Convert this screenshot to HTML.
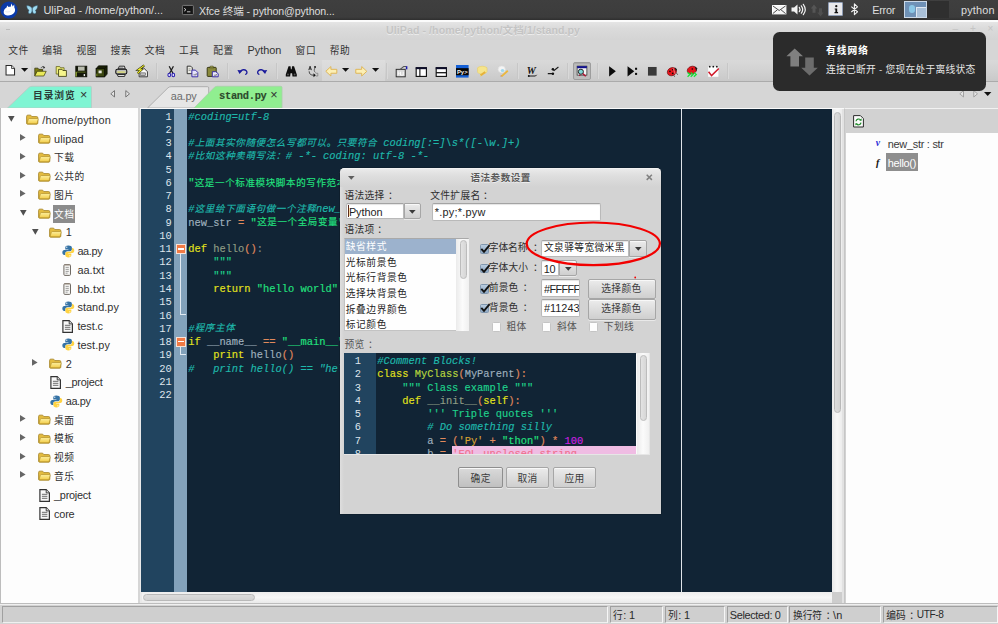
<!DOCTYPE html>
<html lang="zh-CN">
<head>
<meta charset="utf-8">
<title>UliPad - /home/python/文档/1/stand.py</title>
<style>
html,body{margin:0;padding:0;width:998px;height:624px;overflow:hidden;background:#d6d6d6}
body{position:relative;font-family:"Liberation Sans","Noto Sans CJK SC",sans-serif;font-size:10.4px;line-height:14px;color:#2e2e2e}
div,span,svg{position:absolute;box-sizing:border-box;white-space:pre}
svg{overflow:visible}
.m{font-family:"Liberation Mono","Noto Sans CJK SC",monospace;-webkit-text-stroke:.15px}
.n{line-height:14px;color:#dfe6ed;-webkit-text-stroke:0}
</style>
</head>
<body>

<!-- panel -->
<div id="panel" style="left:0px;top:0px;width:998px;height:19.6px;background:linear-gradient(#3f3f3f,#3c3c3c 85%,#2f2f2f)"></div>
<svg style="left:0px;top:0.6px;" width="18" height="18" viewBox="0 0 18 18"><circle cx="9" cy="9" r="8.600" fill="#0b3aa8"/><path d="M3.800 12.300C3.300 9.800 4.600 7.700 6.600 6.600L7.200 4.400 8.600 6C9.300 5.800 9.900 5.800 10.500 5.900L11.500 2.600 12.700 5.500 14.200 3.400 14.400 6.700C15.300 8.100 15.300 9.900 14.500 11.200 13 13.500 10 14.700 7.500 14.500 5.500 14.300 4.200 13.500 3.800 12.300Z" fill="#fff"/><path d="M5.500 10.500c1.500.8 3.500.6 5-.4" fill="none" stroke="#d9dfef" stroke-width=".7"/></svg>
<svg style="left:26px;top:4.5px;" width="12.5" height="10" viewBox="0 0 12.5 10"><path d="M6.2 3.300C4.800 1.400 2.300.2.600.700c.200 2 .9 3.700 2.400 4.600-.8.700-1 2-.3 3.300 1.400.5 2.800-.4 3.500-2.200.7 1.800 2.100 2.700 3.500 2.200.7-1.300.5-2.600-.3-3.300 1.500-.9 2.200-2.600 2.400-4.600-1.700-.5-4.200.7-5.600 2.600z" fill="#9fdcf3" stroke="#2b4a5e" stroke-width=".5"/><path d="M6.200 3.100v5.500" stroke="#35566b" stroke-width=".9"/></svg>
<span style="left:43.5px;top:3px;line-height:14px;font-size:10.9px;color:#dedede;letter-spacing:-0.01px;">UliPad - /home/python/...</span>
<svg style="left:182.2px;top:4.6px;" width="11.8" height="10" viewBox="0 0 11.8 10"><rect x=".4" y=".4" width="11" height="9.200" rx="1" fill="#161616" stroke="#8d8d8d" stroke-width=".8"/><path d="M2.200 3.300l1.800 1.400-1.800 1.400" fill="none" stroke="#e6e6e6" stroke-width=".9"/><path d="M5 6.800h3.400" stroke="#cfcfcf" stroke-width=".9"/></svg>
<span style="left:199px;top:3.7px;line-height:14px;font-size:10.6px;color:#dedede;letter-spacing:-0.09px;">Xfce 终端 - python@python...</span>
<svg style="left:772.4px;top:4.6px;" width="14.4" height="9.4" viewBox="0 0 14.4 9.4"><rect x=".5" y=".5" width="13.400" height="8.400" fill="#f4f4f4" stroke="#fff" stroke-width="1"/><path d="M.8.900l6.400 4.600 6.400-4.600M.8 8.600l4.600-3.800M13.600 8.600L9 4.800" fill="none" stroke="#3c3c3c" stroke-width=".9"/></svg>
<svg style="left:790.8px;top:3.2px;" width="15.5" height="13" viewBox="0 0 15.5 13"><path d="M.5 4.600h2.600L6.500 1.400v10.200L3.100 8.400H.5z" fill="#f2f2f2"/><path d="M8.300 4.300c.9 1.300.9 3.100 0 4.400M10.300 2.800c1.600 2.200 1.600 5.200 0 7.400M12.300 1.300c2.300 3.100 2.300 7.300 0 10.400" fill="none" stroke="#f2f2f2" stroke-width="1.200" stroke-linecap="round"/></svg>
<svg style="left:810px;top:3.5px;" width="15" height="13" viewBox="0 0 15 13"><path d="M4 .5l3.200 4H5.500v4.300h-3V4.500H.8z" fill="#555"/><path d="M10.500 12.500l-3.200-4H9V4.200h3v4.300h1.700z" fill="#4f4f4f"/></svg>
<div style="left:828.3px;top:1.8px;width:14.8px;height:14.6px;background:#e9e9ec;border:1px solid #8f9db5;border-radius:1px"></div>
<svg style="left:833.6px;top:5px;" width="4.4" height="8.5" viewBox="0 0 4.4 8.5"><circle cx="2.300" cy="1.200" r="1.150" fill="#111"/><path d="M.7 3.400h2.500v3.700h.9v1.200H.5V7.100h.9V4.500H.7z" fill="#111"/></svg>
<svg style="left:849.6px;top:3.3px;" width="9.5" height="12.6" viewBox="0 0 9.5 12.6"><path d="M1.300 3.600l6.200 5.200-3.100 2.900V.9l3.100 2.900-6.200 5.200" fill="none" stroke="#f2f2f2" stroke-width="1.100" stroke-linejoin="round"/></svg>
<span style="left:872.2px;top:3px;line-height:14px;font-size:10.9px;color:#dedede;letter-spacing:-0.24px;">Error</span>
<div style="left:903.9px;top:1.2px;width:23px;height:16.8px;background:#6f91b6;border:1px solid #cbd9e8"></div>
<div style="left:916.3px;top:7px;width:9.7px;height:10px;background:#a9c0d8;border-top:1px solid #dfe8f1;border-left:1px solid #dfe8f1"></div>
<div style="left:909px;top:4.5px;width:6px;height:8px;background:#8fd0ee;border-radius:3px;opacity:.85"></div>
<div style="left:926.9px;top:1.2px;width:22.3px;height:16.8px;background:#2f2f2f"></div>
<span style="left:961px;top:3px;line-height:14px;font-size:10.9px;color:#dedede;letter-spacing:0.15px;">python</span>
<!-- window -->
<div id="title" style="left:0px;top:19.6px;width:998px;height:20px;background:linear-gradient(#fbfbfb 0,#fbfbfb 1.5px,#e4e4e4 2.5px,#dadada 9px,#d4d4d4 100%)"></div>
<span style="left:386px;top:23.2px;line-height:14px;font-size:10.6px;font-weight:bold;color:#c4c4c4;letter-spacing:0.08px;text-shadow:0 1px 0 #ececec;">UliPad - /home/python/文档/1/stand.py</span>
<div style="left:6px;top:28.6px;width:4px;height:1.2px;background:#bcbcbc"></div>
<span style="left:952.5px;top:22px;line-height:14px;font-size:10px;color:#c4c4c4;">–</span>
<span style="left:970px;top:22px;line-height:14px;font-size:10px;color:#c4c4c4;">+</span>
<span style="left:987.5px;top:22px;line-height:14px;font-size:10px;color:#c4c4c4;">×</span>
<span style="left:8.2px;top:43.75px;line-height:14px;font-size:9.72px;color:#333;letter-spacing:0.58px;">文件</span>
<span style="left:42.2px;top:43.75px;line-height:14px;font-size:9.72px;color:#333;letter-spacing:0.58px;">编辑</span>
<span style="left:76.4px;top:43.75px;line-height:14px;font-size:9.72px;color:#333;letter-spacing:0.58px;">视图</span>
<span style="left:110.6px;top:43.75px;line-height:14px;font-size:9.72px;color:#333;letter-spacing:0.58px;">搜索</span>
<span style="left:144.8px;top:43.75px;line-height:14px;font-size:9.72px;color:#333;letter-spacing:0.58px;">文档</span>
<span style="left:179px;top:43.75px;line-height:14px;font-size:9.72px;color:#333;letter-spacing:0.58px;">工具</span>
<span style="left:213.2px;top:43.75px;line-height:14px;font-size:9.72px;color:#333;letter-spacing:0.58px;">配置</span>
<span style="left:247.4px;top:42.7px;line-height:14px;font-size:10.9px;color:#333;letter-spacing:0.02px;">Python</span>
<span style="left:295.6px;top:43.75px;line-height:14px;font-size:9.72px;color:#333;letter-spacing:0.58px;">窗口</span>
<span style="left:329.8px;top:43.75px;line-height:14px;font-size:9.72px;color:#333;letter-spacing:0.58px;">帮助</span>
<!-- toolbar -->
<div id="toolbar" style="left:0px;top:59.5px;width:998px;height:22px;background:linear-gradient(#d9d9d9,#d2d2d2 50%,#c9c9c9);border-bottom:1px solid #ababab"></div>
<div style="left:0px;top:59.5px;width:31px;height:21.5px;background:linear-gradient(#e0e0e0,#d6d6d6)"></div>
<div style="left:321.5px;top:59.5px;width:63px;height:21.5px;background:linear-gradient(#dedede,#d4d4d4)"></div>
<div style="left:156.3px;top:62.5px;width:1px;height:16.5px;background:#c7c7c7;box-shadow:1px 0 0 #d9d9d9"></div>
<div style="left:226.5px;top:62.5px;width:1px;height:16.5px;background:#c7c7c7;box-shadow:1px 0 0 #d9d9d9"></div>
<div style="left:275.8px;top:62.5px;width:1px;height:16.5px;background:#c7c7c7;box-shadow:1px 0 0 #d9d9d9"></div>
<div style="left:386px;top:62.5px;width:1px;height:16.5px;background:#c7c7c7;box-shadow:1px 0 0 #d9d9d9"></div>
<div style="left:516.5px;top:62.5px;width:1px;height:16.5px;background:#c7c7c7;box-shadow:1px 0 0 #d9d9d9"></div>
<div style="left:566.5px;top:62.5px;width:1px;height:16.5px;background:#c7c7c7;box-shadow:1px 0 0 #d9d9d9"></div>
<div style="left:597.2px;top:62.5px;width:1px;height:16.5px;background:#c7c7c7;box-shadow:1px 0 0 #d9d9d9"></div>
<div style="left:726.8px;top:62.5px;width:1px;height:16.5px;background:#c7c7c7;box-shadow:1px 0 0 #d9d9d9"></div>
<div style="left:573.4px;top:61.6px;width:18px;height:18px;background:#bdbdbd;border:1px solid #9d9d9d;border-radius:2px;box-shadow:inset 0 1px 1px #a8a8a8"></div>
<svg style="left:3.5px;top:64.6px" width="12.6" height="12.6" viewBox="0 0 16 16"><path d="M2.600 .700h7l3.800 3.800v8.300H2.600z" fill="#fff" stroke="#2a2a2a" stroke-width="1.300"/><path d="M9.600 .700v3.800h3.800" fill="#ddd" stroke="#2a2a2a" stroke-width="1"/></svg>
<svg style="left:34.4px;top:64.6px" width="12.6" height="12.6" viewBox="0 0 16 16"><path d="M1 4h4l1 1.500h5V8H4l-2.500 5.500H1z" fill="#7d7d12" stroke="#2a2a08" stroke-width=".9"/><path d="M4 8h11.500l-3 6H1z" fill="#e9e95a" stroke="#3a3a08" stroke-width=".9"/><path d="M9 3.500c1.200-1.800 3.200-1.800 4.500-.5" fill="none" stroke="#222" stroke-width="1"/><path d="M12.300 1.500l1.900 2.200-2.700.6z" fill="#222"/></svg>
<svg style="left:55.1px;top:64.6px" width="12.6" height="12.6" viewBox="0 0 16 16"><path d="M1.500 2h4.500l1 1.500h4.500v8h-10z" fill="#efef7a" stroke="#55550a" stroke-width=".9"/><path d="M4.500 5.500H9l1 1.500h4.500v7.500h-10z" fill="#f5f58c" stroke="#33330a" stroke-width="1"/></svg>
<svg style="left:75.1px;top:64.6px" width="12.6" height="12.6" viewBox="0 0 16 16"><rect x="1" y="1.500" width="14" height="13.500" fill="#14180a" stroke="#0a0c04" stroke-width="1"/><rect x="3.800" y="2" width="8.400" height="5.200" fill="#b9bcae"/><path d="M1.500 8.500v6" stroke="#a9c23a" stroke-width="1.400"/><path d="M2.500 9h11" stroke="#6f7f22" stroke-width="1"/><rect x="11" y="11.500" width="1.800" height="2.600" fill="#e8e8e8"/></svg>
<svg style="left:95px;top:64.6px" width="12.6" height="12.6" viewBox="0 0 16 16"><path d="M4.500 1h11v10.500l-3 3.500h-11V4.500z" fill="#1a2006" stroke="#0a0c03" stroke-width=".8"/><rect x="1.500" y="4.500" width="10.500" height="10.500" fill="#3b4610" stroke="#0c0e06" stroke-width=".9"/><rect x="4.500" y="7" width="4" height="3.500" fill="#e6e8de"/><path d="M12 4.500L15.500 1" stroke="#0a0c03" stroke-width=".8"/><path d="M2.300 11v3.300" stroke="#8fa42e" stroke-width="1"/></svg>
<svg style="left:115.4px;top:64.6px" width="12.6" height="12.6" viewBox="0 0 16 16"><path d="M4 5l1.500-3.500h6.500L13 5z" fill="#e9e9e9" stroke="#111" stroke-width="1.100"/><path d="M5.500 3.500h5M5 4.800h6" stroke="#555" stroke-width=".7"/><rect x="1" y="5.500" width="14" height="6" rx="2" fill="#bdbdbd" stroke="#0d0d0d" stroke-width="1.300"/><path d="M3 9h10" stroke="#e6e85a" stroke-width="1.300"/><path d="M3 12h10l-.8 2.500H3.800z" fill="#f2f2f2" stroke="#111" stroke-width="1.100"/></svg>
<svg style="left:136.2px;top:64.6px" width="12.6" height="12.6" viewBox="0 0 16 16"><path d="M4 8.500L9.500 3.500l5 5v6.500H4z" fill="#fafafa" stroke="#222" stroke-width="1.100"/><rect x="6" y="10" width="6" height="3.500" fill="#bdbdbd" stroke="#444" stroke-width=".7"/><path d="M10.500.5L3 6h4L2 10.500" fill="none" stroke="#1b1b00" stroke-width="2.600"/><path d="M10.500.5L3 6h4L2 10.500" fill="none" stroke="#f0ee2a" stroke-width="1.400"/></svg>
<svg style="left:165.2px;top:64.6px" width="12.6" height="12.6" viewBox="0 0 16 16"><path d="M5.300 1.500l4.800 9M10.700 1.500l-4.800 9" stroke="#1c1c1c" stroke-width="1.600" fill="none"/><ellipse cx="5.400" cy="12.700" rx="1.700" ry="2.300" fill="#dcdcff" stroke="#2b1fae" stroke-width="1.300"/><ellipse cx="10.600" cy="12.700" rx="1.700" ry="2.300" fill="#dcdcff" stroke="#2b1fae" stroke-width="1.300"/></svg>
<svg style="left:185.5px;top:64.6px" width="12.6" height="12.6" viewBox="0 0 16 16"><path d="M1.500 1.500h4.500l2 2v7.500h-6.500z" fill="#ecece4" stroke="#1d1d1d" stroke-width="1.100"/><path d="M3.300 5h2.500M3.300 7h2.500" stroke="#555" stroke-width=".7"/><path d="M7.500 6.500h4.500l3 3V15h-7.500z" fill="#e6e4fa" stroke="#3224a4" stroke-width="1.200"/><path d="M9.500 12.500h3.500v-2" fill="none" stroke="#555" stroke-width=".9"/></svg>
<svg style="left:206.2px;top:64.6px" width="12.6" height="12.6" viewBox="0 0 16 16"><rect x="1.500" y="3" width="11.500" height="11.500" rx="1" fill="#8a8a3c" stroke="#2c2c0c" stroke-width="1.100"/><path d="M4.500 3.500L5.500 1.500h3.500l1 2z" fill="#d6d86a" stroke="#2c2c0c" stroke-width=".8"/><path d="M8 8.500h4.500l3 2.500v4h-7.500z" fill="#ebe9fb" stroke="#3224a4" stroke-width="1.200"/><path d="M10 13h3.200v-1.500" fill="none" stroke="#555" stroke-width=".9"/></svg>
<svg style="left:235.7px;top:64.6px" width="12.6" height="12.6" viewBox="0 0 16 16"><path d="M5.500 8.300c1.500-2.600 5.500-3 7.500-1 1.400 1.500 1.200 3.400-.6 4.500" fill="none" stroke="#1c1c9c" stroke-width="1.700" stroke-linecap="round"/><path d="M1.800 6.200l6.500.8-3.800 4.500z" fill="#1c1c9c"/></svg>
<svg style="left:255.7px;top:64.6px" width="12.6" height="12.6" viewBox="0 0 16 16"><path d="M10.500 8.300c-1.500-2.600-5.500-3-7.500-1-1.400 1.500-1.200 3.400.6 4.500" fill="none" stroke="#1c1c9c" stroke-width="1.700" stroke-linecap="round"/><path d="M14.200 6.200l-6.500.8 3.800 4.500z" fill="#1c1c9c"/></svg>
<svg style="left:285px;top:64.6px" width="12.6" height="12.6" viewBox="0 0 16 16"><path d="M4.500 1.500h2.500l.5 4h1l.5-4h2.500l3.500 10.500v2.500H9.500l-.5-4H7l-.5 4H1V12z" fill="#0d0d0d"/><circle cx="3.800" cy="12" r="1.200" fill="#555"/><circle cx="12.200" cy="12" r="1.200" fill="#555"/></svg>
<svg style="left:306.1px;top:64.6px" width="12.6" height="12.6" viewBox="0 0 16 16"><path d="M3.500 6.500L5.200 1.500l1.700 5M4.100 5h2.200" fill="none" stroke="#1d1d1d" stroke-width="1.100"/><path d="M4 8c0 3.500 2 5 6 5" fill="none" stroke="#333" stroke-width="1.100"/><path d="M9.500 10.500l3 2.500-3 2.500z" fill="#111"/><circle cx="11.500" cy="2.500" r="1.200" fill="#111"/><path d="M11.500 3.500c-1.500 2-1.500 4.500.5 6" fill="none" stroke="#444" stroke-width="1"/><path d="M12.500 10.500h2.500v3.500h-2.500" fill="none" stroke="#777" stroke-width=".9"/></svg>
<svg style="left:325.4px;top:64.6px" width="12.6" height="12.6" viewBox="0 0 16 16"><path d="M1 8l6.500-6v3.500H15v5H7.500V14z" fill="#fcefb4" stroke="#ddb454" stroke-width="1.200" stroke-linejoin="round"/></svg>
<svg style="left:355px;top:64.6px" width="12.6" height="12.6" viewBox="0 0 16 16"><path d="M15 8L8.500 2v3.500H1v5h7.500V14z" fill="#fcefb4" stroke="#ddb454" stroke-width="1.200" stroke-linejoin="round"/></svg>
<svg style="left:394.5px;top:64.6px" width="12.6" height="12.6" viewBox="0 0 16 16"><rect x="1.500" y="5.500" width="11.500" height="9.500" fill="#d9d9d9" stroke="#2a2a2a" stroke-width="1.200"/><path d="M4 8v5M4 10.500h2M7 8.500v4.500h3.500V8.500" fill="none" stroke="#fafafa" stroke-width="1.200"/><path d="M6.500 5.500L11 2h3" fill="none" stroke="#555" stroke-width="1.300"/><rect x="13.800" y="1.500" width="1.900" height="4" fill="#1b1bb0"/></svg>
<svg style="left:415px;top:64.6px" width="12.6" height="12.6" viewBox="0 0 16 16"><rect x="1.500" y="3.500" width="13" height="11" fill="#fff" stroke="#0d0d0d" stroke-width="1.400"/><rect x="1" y="2.800" width="14" height="2.500" fill="#0d0d2a"/><path d="M6.200 5v9.500" stroke="#0d0d0d" stroke-width="1.400"/></svg>
<svg style="left:435px;top:64.6px" width="12.6" height="12.6" viewBox="0 0 16 16"><rect x="1.500" y="3.500" width="13" height="11" fill="#fff" stroke="#0d0d0d" stroke-width="1.400"/><rect x="1" y="2.800" width="14" height="2.500" fill="#0d0d2a"/><path d="M1.500 9.800h13" stroke="#0d0d0d" stroke-width="1.600"/></svg>
<svg style="left:455.7px;top:64.6px" width="12.6" height="12.6" viewBox="0 0 16 16"><rect x="0" y="0" width="16" height="16" fill="#1560d6"/><rect x="0" y="4" width="16" height="9" fill="#050505"/><text x="1.200" y="11.400" font-family="Liberation Sans,sans-serif" font-size="7.500" font-weight="bold" fill="#f2f2f2">Py&gt;</text></svg>
<svg style="left:476.2px;top:64.6px" width="12.6" height="12.6" viewBox="0 0 16 16"><path d="M2 3.500c3-2.500 9-2.500 12 0v5c-1 2-3 2.500-4.500 2.500L6 14.500V11C3.500 11 2 10 2 8.500z" fill="#f5e48c" stroke="#e8cf6a" stroke-width=".8"/><path d="M5 12l6-4 1.500 2-5.500 4z" fill="#e6b23a"/></svg>
<svg style="left:497px;top:64.6px" width="12.6" height="12.6" viewBox="0 0 16 16"><ellipse cx="6" cy="5.500" rx="4.500" ry="4.200" fill="#f4f4f4" stroke="#e0e0e0" stroke-width=".8"/><ellipse cx="7" cy="7" rx="2.300" ry="2" fill="#9fd8ee"/><path d="M5 13.500l8-7 1.500 1.800-8 7z" fill="#ecb73c"/><path d="M4.500 14.500l1.500-.3-1-1.200z" fill="#b0502a"/></svg>
<svg style="left:526.1px;top:64.6px" width="12.6" height="12.6" viewBox="0 0 16 16"><text x="1" y="11.500" font-family="Liberation Serif,serif" font-size="13" font-style="italic" font-weight="bold" fill="#111">W</text><path d="M3.500 14h8.500l1.500-1.500" fill="none" stroke="#111" stroke-width="1.200"/><circle cx="3.500" cy="14" r="1.200" fill="#111"/></svg>
<svg style="left:546.6px;top:64.6px" width="12.6" height="12.6" viewBox="0 0 16 16"><path d="M1 11h6.500M7.500 5.500L9 7l5.500-4.500" fill="none" stroke="#1a1a1a" stroke-width="1.400"/><circle cx="7.500" cy="11" r="1.600" fill="#111"/><circle cx="7.500" cy="5.500" r="1.600" fill="#111"/></svg>
<svg style="left:605.7px;top:64.6px" width="12.6" height="12.6" viewBox="0 0 16 16"><path d="M4 1.500v13L12.500 8z" fill="#0b0b0b"/></svg>
<svg style="left:625.7px;top:64.6px" width="12.6" height="12.6" viewBox="0 0 16 16"><path d="M2 1.500v13L10.500 8z" fill="#0b0b0b"/><rect x="11.500" y="3.500" width="2.600" height="2.600" fill="#0b0b0b"/><rect x="11.500" y="10" width="2.600" height="2.600" fill="#0b0b0b"/></svg>
<svg style="left:645.8px;top:64.6px" width="12.6" height="12.6" viewBox="0 0 16 16"><rect x="2.500" y="2.500" width="11" height="11" fill="#3a3a3a"/></svg>
<svg style="left:665.7px;top:64.6px" width="12.6" height="12.6" viewBox="0 0 16 16"><ellipse cx="7.500" cy="8.500" rx="6" ry="5" transform="rotate(-25 7.500 8.500)" fill="#e8141c" stroke="#6c0a0e" stroke-width=".8"/><path d="M11 3l3 2.500-1.500 3z" fill="#1c1c1c"/><circle cx="5" cy="8" r="1.100" fill="#160808"/><circle cx="8.500" cy="10.500" r="1.100" fill="#160808"/><circle cx="8.500" cy="6" r="1" fill="#160808"/><path d="M9 4l3 8" stroke="#f7a0a6" stroke-width=".8"/><path d="M13 10l2 2.500M10 13l1 2" stroke="#222" stroke-width=".8"/></svg>
<svg style="left:686.2px;top:64.6px" width="12.6" height="12.6" viewBox="0 0 16 16"><ellipse cx="7.500" cy="6.500" rx="6" ry="4.800" transform="rotate(-20 7.500 6.500)" fill="#e8141c" stroke="#6c0a0e" stroke-width=".8"/><path d="M11 1.500l3.500 2.500-1.500 3.500z" fill="#1c1c1c"/><circle cx="8" cy="5" r="1" fill="#160808"/><path d="M2 9.500l3 2.700-3 2.700M6 9.500l3 2.700-3 2.700M10 9.500l3 2.700-3 2.700" fill="none" stroke="#17e43a" stroke-width="1.700"/></svg>
<svg style="left:707px;top:64.6px" width="12.6" height="12.6" viewBox="0 0 16 16"><rect x="1.500" y="2" width="13" height="13" fill="#fdfdfd"/><circle cx="3.500" cy="2.200" r="1.100" fill="#111"/><circle cx="8" cy="2.200" r="1.100" fill="#111"/><circle cx="12.500" cy="2.200" r="1.100" fill="#111"/><path d="M2 8.500l3.800 5L15 4.500" fill="none" stroke="#d01828" stroke-width="1.900"/></svg>
<svg style="left:576.4px;top:64.8px" width="12" height="12" viewBox="0 0 16 16"><rect x="1.500" y="1.500" width="13" height="12" fill="#f6f6f6" stroke="#333" stroke-width="1"/><rect x="1.500" y="1.500" width="13" height="2.800" fill="#12128c"/><circle cx="6.500" cy="9" r="3.400" fill="#7fd6d6" stroke="#222" stroke-width="1.300"/><path d="M9 11.500l4 3.500" stroke="#b01030" stroke-width="1.800"/><circle cx="5" cy="13.500" r="1" fill="#b01030"/></svg>
<svg style="left:20.7px;top:67.8px" width="7.2" height="3.8" viewBox="0 0 8 4"><path d="M0 0h8L4 4z" fill="#111"/></svg>
<svg style="left:342.1px;top:67.8px" width="7.2" height="3.8" viewBox="0 0 8 4"><path d="M0 0h8L4 4z" fill="#111"/></svg>
<svg style="left:371.8px;top:67.8px" width="7.2" height="3.8" viewBox="0 0 8 4"><path d="M0 0h8L4 4z" fill="#111"/></svg>
<!-- tabs -->
<svg style="left:0;top:84px" width="300" height="25" viewBox="0 84 300 25"><path d="M7.500 108L29 87.400q1.200-1.100 3-1.100H90.300q1.200 0 1.200 1.200V108z" fill="#7ff5d3" stroke="#b7c9c3" stroke-width=".8"/><path d="M147.500 108L168 87.800q1.200-1.100 3-1.100h36.500q1.200 0 1.200 1.200V108z" fill="#e6e6e6" stroke="#a9a9a9" stroke-width=".9"/><path d="M194 108L214.300 87.400q1.200-1.100 3-1.100h63.500q1.200 0 1.200 1.200V108z" fill="#90ee90" stroke="#a8cfa8" stroke-width=".8"/></svg>
<span style="left:33px;top:88.65px;line-height:14px;font-size:9.72px;font-weight:bold;color:#2b3b36;letter-spacing:0.93px;">目录浏览</span>
<span style="left:79.9px;top:87.9px;line-height:14px;font-size:12.6px;color:#333;">×</span>
<svg style="left:110.4px;top:89.5px" width="5.4" height="7.6" viewBox="0 0 5.400 7.600"><path d="M4.5 .6L.8 3.800l3.700 3.200z" fill="#e6e6e6" stroke="#6a6a6a" stroke-width=".9"/></svg>
<svg style="left:124.6px;top:89.5px" width="5.4" height="7.6" viewBox="0 0 5.400 7.600"><path d="M.8 .6l3.700 3.200L.8 7z" fill="#e6e6e6" stroke="#6a6a6a" stroke-width=".9"/></svg>
<span style="left:170.8px;top:89.3px;line-height:14px;font-size:10.9px;color:#6b6b6b;letter-spacing:-0.17px;">aa.py</span>
<span class="m" style="left:219px;top:89px;line-height:14px;font-weight:bold;color:#2c4a2c;letter-spacing:-0.29px;">stand.py</span>
<span style="left:270.3px;top:87.9px;line-height:14px;font-size:12.6px;color:#333;">×</span>
<svg style="left:959.2px;top:89.5px" width="5.4" height="7.6" viewBox="0 0 5.400 7.600"><path d="M4.5 .6L.8 3.800l3.700 3.200z" fill="#e6e6e6" stroke="#9a9a9a" stroke-width=".9"/></svg>
<svg style="left:973.2px;top:89.5px" width="5.4" height="7.6" viewBox="0 0 5.400 7.600"><path d="M.8 .6l3.700 3.200L.8 7z" fill="#e6e6e6" stroke="#9a9a9a" stroke-width=".9"/></svg>
<svg style="left:984px;top:91.6px;" width="7.4" height="4" viewBox="0 0 7.4 4"><path d="M0 0h7.400L3.700 4z" fill="#111"/></svg>
<!-- tree -->
<svg width="0" height="0" style="left:0;top:0"><defs><linearGradient id="fg" x1="0" y1="0" x2="0" y2="1"><stop offset="0" stop-color="#fdf0a0"/><stop offset="1" stop-color="#f2cc48"/></linearGradient></defs></svg>
<div style="left:0px;top:107.6px;width:1.2px;height:495.2px;background:#bdbdbd"></div>
<div id="left" style="left:1.2px;top:107.6px;width:136.5px;height:495.2px;background:#fdfdfd"></div>
<svg style="left:8.3px;top:116.2px" width="6.6" height="5.8" viewBox="0 0 6.600 5.800"><path d="M0 0h6.600L3.300 5.800z" fill="#505050"/></svg>
<svg style="left:25.9px;top:114.3px;" width="12.6" height="10.8" viewBox="0 0 13 11"><path d="M.6 2.400q0-1.300 1.300-1.300h2.900l1.200 1.500h4.900q1.300 0 1.300 1.300v5.400q0 1.100-1.100 1.100H1.700Q.6 10.400.6 9.300z" fill="#e3bb3e" stroke="#a07f22" stroke-width=".8"/><path d="M1 10L2.400 5.400q.3-.8 1.200-.8h8.300q.9 0 .6.900L11.400 10z" fill="url(#fg)" stroke="#b08e28" stroke-width=".7"/></svg>
<span style="left:42.3px;top:113px;line-height:14px;font-size:10.9px;color:#303030;letter-spacing:0.22px;">/home/python</span>
<svg style="left:19.9px;top:134.04px" width="5.6" height="6.8" viewBox="0 0 5.600 6.800"><path d="M0 0v6.800L5.600 3.400z" fill="#666"/></svg>
<svg style="left:37.6px;top:133.04px;" width="12.6" height="10.8" viewBox="0 0 13 11"><path d="M.6 2.400q0-1.300 1.300-1.300h2.900l1.200 1.500h4.900q1.300 0 1.300 1.300v5.400q0 1.100-1.100 1.100H1.700Q.6 10.400.6 9.300z" fill="#e3bb3e" stroke="#a07f22" stroke-width=".8"/><path d="M1 10L2.400 5.400q.3-.8 1.200-.8h8.300q.9 0 .6.900L11.400 10z" fill="url(#fg)" stroke="#b08e28" stroke-width=".7"/></svg>
<span style="left:54px;top:131.74px;line-height:14px;font-size:10.9px;color:#303030;letter-spacing:0.09px;">ulipad</span>
<svg style="left:19.9px;top:152.78px" width="5.6" height="6.8" viewBox="0 0 5.600 6.800"><path d="M0 0v6.800L5.600 3.400z" fill="#666"/></svg>
<svg style="left:37.6px;top:151.78px;" width="12.6" height="10.8" viewBox="0 0 13 11"><path d="M.6 2.400q0-1.300 1.300-1.300h2.900l1.200 1.500h4.900q1.300 0 1.300 1.300v5.400q0 1.100-1.100 1.100H1.700Q.6 10.400.6 9.300z" fill="#e3bb3e" stroke="#a07f22" stroke-width=".8"/><path d="M1 10L2.400 5.400q.3-.8 1.200-.8h8.300q.9 0 .6.900L11.400 10z" fill="url(#fg)" stroke="#b08e28" stroke-width=".7"/></svg>
<span style="left:54px;top:151.33px;line-height:14px;font-size:9.72px;color:#303030;letter-spacing:0.58px;">下载</span>
<svg style="left:19.9px;top:171.52px" width="5.6" height="6.8" viewBox="0 0 5.600 6.800"><path d="M0 0v6.800L5.600 3.400z" fill="#666"/></svg>
<svg style="left:37.6px;top:170.52px;" width="12.6" height="10.8" viewBox="0 0 13 11"><path d="M.6 2.400q0-1.300 1.300-1.300h2.900l1.200 1.500h4.900q1.300 0 1.300 1.300v5.400q0 1.100-1.100 1.100H1.700Q.6 10.400.6 9.300z" fill="#e3bb3e" stroke="#a07f22" stroke-width=".8"/><path d="M1 10L2.400 5.400q.3-.8 1.200-.8h8.300q.9 0 .6.900L11.400 10z" fill="url(#fg)" stroke="#b08e28" stroke-width=".7"/></svg>
<span style="left:54px;top:170.07px;line-height:14px;font-size:9.72px;color:#303030;letter-spacing:0.58px;">公共的</span>
<svg style="left:19.9px;top:190.26px" width="5.6" height="6.8" viewBox="0 0 5.600 6.800"><path d="M0 0v6.800L5.600 3.400z" fill="#666"/></svg>
<svg style="left:37.6px;top:189.26px;" width="12.6" height="10.8" viewBox="0 0 13 11"><path d="M.6 2.400q0-1.300 1.300-1.300h2.900l1.200 1.500h4.900q1.300 0 1.300 1.300v5.400q0 1.100-1.100 1.100H1.700Q.6 10.400.6 9.300z" fill="#e3bb3e" stroke="#a07f22" stroke-width=".8"/><path d="M1 10L2.400 5.400q.3-.8 1.200-.8h8.300q.9 0 .6.900L11.400 10z" fill="url(#fg)" stroke="#b08e28" stroke-width=".7"/></svg>
<span style="left:54px;top:188.81px;line-height:14px;font-size:9.72px;color:#303030;letter-spacing:0.58px;">图片</span>
<svg style="left:20px;top:209.9px" width="6.6" height="5.8" viewBox="0 0 6.600 5.800"><path d="M0 0h6.600L3.300 5.800z" fill="#505050"/></svg>
<svg style="left:37.6px;top:208px;" width="12.6" height="10.8" viewBox="0 0 13 11"><path d="M.6 2.400q0-1.300 1.300-1.300h2.900l1.200 1.500h4.900q1.300 0 1.300 1.300v5.400q0 1.100-1.100 1.100H1.700Q.6 10.400.6 9.300z" fill="#e3bb3e" stroke="#a07f22" stroke-width=".8"/><path d="M1 10L2.400 5.400q.3-.8 1.200-.8h8.300q.9 0 .6.900L11.400 10z" fill="url(#fg)" stroke="#b08e28" stroke-width=".7"/></svg>
<div style="left:52.6px;top:204.8px;width:22.6px;height:17.8px;background:#8b8b8b"></div>
<span style="left:54px;top:208.05px;line-height:14px;font-size:9.72px;color:#fff;letter-spacing:0.58px;">文档</span>
<svg style="left:31.7px;top:228.64px" width="6.6" height="5.8" viewBox="0 0 6.600 5.800"><path d="M0 0h6.600L3.300 5.800z" fill="#505050"/></svg>
<svg style="left:49.3px;top:226.74px;" width="12.6" height="10.8" viewBox="0 0 13 11"><path d="M.6 2.400q0-1.300 1.300-1.300h2.900l1.200 1.500h4.900q1.300 0 1.300 1.300v5.400q0 1.100-1.100 1.100H1.700Q.6 10.400.6 9.300z" fill="#e3bb3e" stroke="#a07f22" stroke-width=".8"/><path d="M1 10L2.400 5.400q.3-.8 1.200-.8h8.300q.9 0 .6.900L11.400 10z" fill="url(#fg)" stroke="#b08e28" stroke-width=".7"/></svg>
<span style="left:65.7px;top:225.44px;line-height:14px;font-size:10.9px;color:#303030;">1</span>
<svg style="left:61.9px;top:244.58px;" width="12.6" height="13" viewBox="0 0 12.800 13.300"><path d="M6.300.5c-2 0-3 .8-3 2.200V4.500h3.200v.7H2.300C1 5.200.3 6.300.3 7.800s.8 2.500 2 2.500h1.100V8.500c0-1.300 1-2.200 2.300-2.200h2.600c1 0 1.800-.8 1.800-1.900V2.700C10.100 1.300 8.900.5 6.300.5z" fill="#3673a5"/><circle cx="4.800" cy="2.200" r=".65" fill="#fff"/><path d="M6.500 12.800c2 0 3-.8 3-2.200V8.800H6.300v-.7h4.200c1.300 0 2-1.100 2-2.600s-.8-2.500-2-2.500h-.4v1.800c0 1.300-1 2.200-2.300 2.200H5.200c-1 0-1.800.8-1.800 1.900v1.700c0 1.400 1.200 2.200 3.100 2.200z" fill="#ffd342"/><circle cx="8" cy="11.100" r=".65" fill="#fff"/></svg>
<span style="left:77.4px;top:244.18px;line-height:14px;font-size:10.9px;color:#303030;letter-spacing:-0.35px;">aa.py</span>
<svg style="left:63.2px;top:263.82px;" width="8.4" height="12" viewBox="0 0 8.400 12"><path d="M.9 1.600Q.9.600 1.900.600h4.600Q7.500.6 7.500 1.600v8.800q0 1-1 1H1.900q-1 0-1-1z" fill="#f4f4f2" stroke="#6e6862" stroke-width="1"/><path d="M2.600 3.400h3.200M2.600 5.400h3.200M2.600 7.400h3.200M2.600 9.200h2" stroke="#8a8a8a" stroke-width=".8"/><path d="M1.200 1h6" stroke="#9c8c80" stroke-width=".9"/></svg>
<span style="left:77.4px;top:262.92px;line-height:14px;font-size:10.9px;color:#303030;letter-spacing:0.06px;">aa.txt</span>
<svg style="left:63.2px;top:282.56px;" width="8.4" height="12" viewBox="0 0 8.400 12"><path d="M.9 1.600Q.9.600 1.900.600h4.600Q7.500.6 7.500 1.600v8.800q0 1-1 1H1.900q-1 0-1-1z" fill="#f4f4f2" stroke="#6e6862" stroke-width="1"/><path d="M2.600 3.400h3.200M2.600 5.400h3.200M2.600 7.400h3.200M2.600 9.200h2" stroke="#8a8a8a" stroke-width=".8"/><path d="M1.200 1h6" stroke="#9c8c80" stroke-width=".9"/></svg>
<span style="left:77.4px;top:281.66px;line-height:14px;font-size:10.9px;color:#303030;letter-spacing:0.16px;">bb.txt</span>
<svg style="left:61.9px;top:300.8px;" width="12.6" height="13" viewBox="0 0 12.800 13.300"><path d="M6.300.5c-2 0-3 .8-3 2.200V4.500h3.200v.7H2.300C1 5.200.3 6.300.3 7.800s.8 2.500 2 2.500h1.100V8.500c0-1.300 1-2.200 2.300-2.200h2.600c1 0 1.800-.8 1.800-1.900V2.700C10.100 1.300 8.900.5 6.300.5z" fill="#3673a5"/><circle cx="4.800" cy="2.200" r=".65" fill="#fff"/><path d="M6.500 12.800c2 0 3-.8 3-2.200V8.800H6.300v-.7h4.200c1.300 0 2-1.100 2-2.600s-.8-2.500-2-2.500h-.4v1.800c0 1.300-1 2.200-2.300 2.200H5.200c-1 0-1.800.8-1.800 1.900v1.700c0 1.400 1.200 2.200 3.100 2.200z" fill="#ffd342"/><circle cx="8" cy="11.100" r=".65" fill="#fff"/></svg>
<span style="left:77.4px;top:300.4px;line-height:14px;font-size:10.9px;color:#303030;letter-spacing:0.04px;">stand.py</span>
<svg style="left:61.9px;top:319.94px;" width="11.3" height="13" viewBox="0 0 11.300 13"><path d="M.9 .700h6.300l3.200 3.200v8.400H.9z" fill="#f9f9f9" stroke="#333" stroke-width="1.200"/><path d="M7.200 .700v3.200h3.200" fill="#e2e2e2" stroke="#333" stroke-width=".9"/><path d="M2.900 5.300h5.500M2.900 7.300h5.500M2.900 9.300h5.500" stroke="#6a6a6a" stroke-width="1"/></svg>
<span style="left:77.4px;top:319.14px;line-height:14px;font-size:10.9px;color:#303030;letter-spacing:-0.07px;">test.c</span>
<svg style="left:61.9px;top:338.28px;" width="12.6" height="13" viewBox="0 0 12.800 13.300"><path d="M6.300.5c-2 0-3 .8-3 2.200V4.500h3.200v.7H2.300C1 5.200.3 6.300.3 7.800s.8 2.500 2 2.500h1.100V8.500c0-1.300 1-2.200 2.300-2.200h2.600c1 0 1.800-.8 1.800-1.900V2.700C10.100 1.300 8.900.5 6.300.5z" fill="#3673a5"/><circle cx="4.800" cy="2.200" r=".65" fill="#fff"/><path d="M6.500 12.800c2 0 3-.8 3-2.200V8.800H6.300v-.7h4.200c1.300 0 2-1.100 2-2.600s-.8-2.500-2-2.500h-.4v1.800c0 1.300-1 2.200-2.300 2.200H5.200c-1 0-1.800.8-1.800 1.900v1.700c0 1.400 1.200 2.200 3.100 2.200z" fill="#ffd342"/><circle cx="8" cy="11.100" r=".65" fill="#fff"/></svg>
<span style="left:77.4px;top:337.88px;line-height:14px;font-size:10.9px;color:#303030;letter-spacing:0.06px;">test.py</span>
<svg style="left:31.6px;top:358.92px" width="5.6" height="6.8" viewBox="0 0 5.600 6.800"><path d="M0 0v6.800L5.600 3.400z" fill="#666"/></svg>
<svg style="left:49.3px;top:357.92px;" width="12.6" height="10.8" viewBox="0 0 13 11"><path d="M.6 2.400q0-1.300 1.300-1.300h2.900l1.200 1.500h4.900q1.300 0 1.300 1.300v5.400q0 1.100-1.100 1.100H1.700Q.6 10.400.6 9.300z" fill="#e3bb3e" stroke="#a07f22" stroke-width=".8"/><path d="M1 10L2.400 5.400q.3-.8 1.200-.8h8.300q.9 0 .6.900L11.400 10z" fill="url(#fg)" stroke="#b08e28" stroke-width=".7"/></svg>
<span style="left:65.7px;top:356.62px;line-height:14px;font-size:10.9px;color:#303030;">2</span>
<svg style="left:50.2px;top:376.16px;" width="11.3" height="13" viewBox="0 0 11.300 13"><path d="M.9 .700h6.300l3.200 3.200v8.400H.9z" fill="#f9f9f9" stroke="#333" stroke-width="1.200"/><path d="M7.200 .700v3.200h3.200" fill="#e2e2e2" stroke="#333" stroke-width=".9"/><path d="M2.900 5.300h5.500M2.900 7.300h5.500M2.900 9.300h5.500" stroke="#6a6a6a" stroke-width="1"/></svg>
<span style="left:65.7px;top:375.36px;line-height:14px;font-size:10.9px;color:#303030;letter-spacing:-0.24px;">_project</span>
<svg style="left:50.2px;top:394.5px;" width="12.6" height="13" viewBox="0 0 12.800 13.300"><path d="M6.300.5c-2 0-3 .8-3 2.200V4.500h3.200v.7H2.300C1 5.200.3 6.300.3 7.800s.8 2.500 2 2.500h1.100V8.500c0-1.300 1-2.200 2.300-2.200h2.600c1 0 1.800-.8 1.800-1.900V2.700C10.100 1.300 8.900.5 6.300.5z" fill="#3673a5"/><circle cx="4.800" cy="2.200" r=".65" fill="#fff"/><path d="M6.500 12.800c2 0 3-.8 3-2.200V8.800H6.300v-.7h4.200c1.300 0 2-1.100 2-2.600s-.8-2.500-2-2.500h-.4v1.800c0 1.300-1 2.200-2.300 2.200H5.200c-1 0-1.800.8-1.800 1.900v1.700c0 1.400 1.200 2.200 3.100 2.200z" fill="#ffd342"/><circle cx="8" cy="11.100" r=".65" fill="#fff"/></svg>
<span style="left:65.7px;top:394.1px;line-height:14px;font-size:10.9px;color:#303030;letter-spacing:-0.35px;">aa.py</span>
<svg style="left:19.9px;top:415.14px" width="5.6" height="6.8" viewBox="0 0 5.600 6.800"><path d="M0 0v6.800L5.600 3.400z" fill="#666"/></svg>
<svg style="left:37.6px;top:414.14px;" width="12.6" height="10.8" viewBox="0 0 13 11"><path d="M.6 2.400q0-1.300 1.300-1.300h2.900l1.200 1.500h4.900q1.300 0 1.300 1.300v5.400q0 1.100-1.100 1.100H1.700Q.6 10.400.6 9.300z" fill="#e3bb3e" stroke="#a07f22" stroke-width=".8"/><path d="M1 10L2.400 5.400q.3-.8 1.200-.8h8.300q.9 0 .6.900L11.400 10z" fill="url(#fg)" stroke="#b08e28" stroke-width=".7"/></svg>
<span style="left:54px;top:413.69px;line-height:14px;font-size:9.72px;color:#303030;letter-spacing:0.58px;">桌面</span>
<svg style="left:19.9px;top:433.88px" width="5.6" height="6.8" viewBox="0 0 5.600 6.800"><path d="M0 0v6.800L5.600 3.400z" fill="#666"/></svg>
<svg style="left:37.6px;top:432.88px;" width="12.6" height="10.8" viewBox="0 0 13 11"><path d="M.6 2.400q0-1.300 1.300-1.300h2.900l1.200 1.500h4.900q1.300 0 1.300 1.300v5.400q0 1.100-1.100 1.100H1.700Q.6 10.400.6 9.300z" fill="#e3bb3e" stroke="#a07f22" stroke-width=".8"/><path d="M1 10L2.400 5.400q.3-.8 1.200-.8h8.300q.9 0 .6.900L11.400 10z" fill="url(#fg)" stroke="#b08e28" stroke-width=".7"/></svg>
<span style="left:54px;top:432.43px;line-height:14px;font-size:9.72px;color:#303030;letter-spacing:0.58px;">模板</span>
<svg style="left:19.9px;top:452.62px" width="5.6" height="6.8" viewBox="0 0 5.600 6.800"><path d="M0 0v6.800L5.600 3.400z" fill="#666"/></svg>
<svg style="left:37.6px;top:451.62px;" width="12.6" height="10.8" viewBox="0 0 13 11"><path d="M.6 2.400q0-1.300 1.300-1.300h2.900l1.200 1.500h4.900q1.300 0 1.300 1.300v5.400q0 1.100-1.100 1.100H1.700Q.6 10.400.6 9.300z" fill="#e3bb3e" stroke="#a07f22" stroke-width=".8"/><path d="M1 10L2.400 5.400q.3-.8 1.200-.8h8.300q.9 0 .6.900L11.400 10z" fill="url(#fg)" stroke="#b08e28" stroke-width=".7"/></svg>
<span style="left:54px;top:451.17px;line-height:14px;font-size:9.72px;color:#303030;letter-spacing:0.58px;">视频</span>
<svg style="left:19.9px;top:471.36px" width="5.6" height="6.8" viewBox="0 0 5.600 6.800"><path d="M0 0v6.800L5.600 3.400z" fill="#666"/></svg>
<svg style="left:37.6px;top:470.36px;" width="12.6" height="10.8" viewBox="0 0 13 11"><path d="M.6 2.400q0-1.300 1.300-1.300h2.900l1.200 1.500h4.900q1.300 0 1.300 1.300v5.400q0 1.100-1.100 1.100H1.700Q.6 10.400.6 9.300z" fill="#e3bb3e" stroke="#a07f22" stroke-width=".8"/><path d="M1 10L2.400 5.400q.3-.8 1.200-.8h8.300q.9 0 .6.900L11.400 10z" fill="url(#fg)" stroke="#b08e28" stroke-width=".7"/></svg>
<span style="left:54px;top:469.91px;line-height:14px;font-size:9.72px;color:#303030;letter-spacing:0.58px;">音乐</span>
<svg style="left:38.5px;top:488.6px;" width="11.3" height="13" viewBox="0 0 11.300 13"><path d="M.9 .700h6.300l3.200 3.200v8.400H.9z" fill="#f9f9f9" stroke="#333" stroke-width="1.200"/><path d="M7.200 .700v3.200h3.200" fill="#e2e2e2" stroke="#333" stroke-width=".9"/><path d="M2.900 5.300h5.500M2.900 7.300h5.500M2.900 9.300h5.500" stroke="#6a6a6a" stroke-width="1"/></svg>
<span style="left:54px;top:487.8px;line-height:14px;font-size:10.9px;color:#303030;letter-spacing:-0.24px;">_project</span>
<svg style="left:38.5px;top:507.34px;" width="11.3" height="13" viewBox="0 0 11.300 13"><path d="M.9 .700h6.300l3.200 3.200v8.400H.9z" fill="#f9f9f9" stroke="#333" stroke-width="1.200"/><path d="M7.200 .700v3.200h3.200" fill="#e2e2e2" stroke="#333" stroke-width=".9"/><path d="M2.900 5.300h5.500M2.900 7.300h5.500M2.900 9.300h5.500" stroke="#6a6a6a" stroke-width="1"/></svg>
<span style="left:54px;top:506.54px;line-height:14px;font-size:10.9px;color:#303030;letter-spacing:-0.17px;">core</span>
<!-- editor -->
<div style="left:139.8px;top:108px;width:706px;height:495px;background:#e9e9e9;border-top:1px solid #fafafa"></div>
<div id="ed" style="left:141.3px;top:108.8px;width:690.7px;height:483.2px;background:#112435"></div>
<div id="ln" style="left:141.3px;top:108.8px;width:32.9px;height:483.2px;background:#21445f"></div>
<div id="fold" style="left:174.2px;top:108.8px;width:12.7px;height:483.2px;background:#83a2bb"></div>
<div id="edge" style="left:681px;top:108.8px;width:1px;height:483.2px;background:#dfe4e9"></div>
<span class="m n" style="left:165.46px;top:109.6px">1</span>
<span class="m n" style="left:165.46px;top:122.86px">2</span>
<span class="m n" style="left:165.46px;top:136.12px">3</span>
<span class="m n" style="left:165.46px;top:149.38px">4</span>
<span class="m n" style="left:165.46px;top:162.64px">5</span>
<span class="m n" style="left:165.46px;top:175.9px">6</span>
<span class="m n" style="left:165.46px;top:189.16px">7</span>
<span class="m n" style="left:165.46px;top:202.42px">8</span>
<span class="m n" style="left:165.46px;top:215.68px">9</span>
<span class="m n" style="left:159.22px;top:228.94px">10</span>
<span class="m n" style="left:159.22px;top:242.2px">11</span>
<span class="m n" style="left:159.22px;top:255.46px">12</span>
<span class="m n" style="left:159.22px;top:268.72px">13</span>
<span class="m n" style="left:159.22px;top:281.98px">14</span>
<span class="m n" style="left:159.22px;top:295.24px">15</span>
<span class="m n" style="left:159.22px;top:308.5px">16</span>
<span class="m n" style="left:159.22px;top:321.76px">17</span>
<span class="m n" style="left:159.22px;top:335.02px">18</span>
<span class="m n" style="left:159.22px;top:348.28px">19</span>
<span class="m n" style="left:159.22px;top:361.54px">20</span>
<span class="m n" style="left:159.22px;top:374.8px">21</span>
<span class="m n" style="left:159.22px;top:388.06px">22</span>
<div style="left:179.9px;top:253.5px;width:1.1px;height:61.3px;background:#e3ebf2"></div><div style="left:179.9px;top:314.3px;width:5.9px;height:1.1px;background:#e3ebf2"></div><div style="left:175.9px;top:244px;width:9.8px;height:9.8px;background:#f07a45;border:1px solid #fbe3d6"></div><div style="left:177.6px;top:248.2px;width:6.4px;height:1.4px;background:#fff"></div>
<div style="left:179.9px;top:346.32px;width:1.1px;height:8.26px;background:#e3ebf2"></div><div style="left:179.9px;top:354.08px;width:5.9px;height:1.1px;background:#e3ebf2"></div><div style="left:175.9px;top:336.82px;width:9.8px;height:9.8px;background:#f07a45;border:1px solid #fbe3d6"></div><div style="left:177.6px;top:341.02px;width:6.4px;height:1.4px;background:#fff"></div>
<span class="m" style="left:188.2px;top:109.6px;line-height:14px;color:#1fb8ab;font-style:italic;">#coding=utf-8</span>
<span class="m" style="left:188.2px;top:136.12px;line-height:14px;color:#1fb8ab;font-style:italic;">#</span><span class="m" style="left:194.74px;top:136.72px;line-height:14px;width:182.52px;color:#1fb8ab;font-size:9.500px;letter-spacing:0.64px;font-style:italic;">上面其实你随便怎么写都可以。只要符合</span><span class="m" style="left:383.2px;top:136.12px;line-height:14px;color:#1fb8ab;font-style:italic;">coding[:=]\s*([-\w.]+)</span>
<span class="m" style="left:188.2px;top:149.38px;line-height:14px;color:#1fb8ab;font-style:italic;">#</span><span class="m" style="left:194.74px;top:149.98px;line-height:14px;width:91.26px;color:#1fb8ab;font-size:9.500px;letter-spacing:0.64px;font-style:italic;">比如这种卖萌写法：</span><span class="m" style="left:285.7px;top:149.38px;line-height:14px;color:#1fb8ab;font-style:italic;"># -*- coding: utf-8 -*-</span>
<span class="m" style="left:188.2px;top:175.9px;line-height:14px;color:#22e07e;">"</span><span class="m" style="left:194.74px;top:176.5px;line-height:14px;width:152.1px;color:#22e07e;font-size:9.500px;letter-spacing:0.64px;">这是一个标准模块脚本的写作范本</span><span class="m" style="left:346.54px;top:175.9px;line-height:14px;color:#22e07e;">"</span>
<span class="m" style="left:188.2px;top:202.42px;line-height:14px;color:#1fb8ab;font-style:italic;">#</span><span class="m" style="left:194.74px;top:203.02px;line-height:14px;width:121.68px;color:#1fb8ab;font-size:9.500px;letter-spacing:0.64px;font-style:italic;">这里给下面语句做一个注释</span><span class="m" style="left:316.12px;top:202.42px;line-height:14px;color:#1fb8ab;font-style:italic;">new_str</span>
<span class="m" style="left:188.2px;top:215.68px;line-height:14px;color:#9fb0bd;">new_str</span><span class="m" style="left:238.12px;top:215.68px;line-height:14px;color:#e08a5c;">=</span><span class="m" style="left:250.6px;top:215.68px;line-height:14px;color:#22e07e;">"</span><span class="m" style="left:257.14px;top:216.28px;line-height:14px;width:81.12px;color:#22e07e;font-size:9.500px;letter-spacing:0.64px;">这是一个全局变量</span><span class="m" style="left:337.96px;top:215.68px;line-height:14px;color:#22e07e;">"</span>
<span class="m" style="left:188.2px;top:242.2px;line-height:14px;color:#e2e21c;">def</span><span class="m" style="left:213.16px;top:242.2px;line-height:14px;color:#8f9c84;">hello</span><span class="m" style="left:244.36px;top:242.2px;line-height:14px;color:#e08a5c;">()</span><span class="m" style="left:256.84px;top:242.2px;line-height:14px;color:#7d8892;">:</span>
<span class="m" style="left:213.16px;top:255.46px;line-height:14px;color:#1fd28c;">"""</span>
<span class="m" style="left:213.16px;top:268.72px;line-height:14px;color:#1fd28c;">"""</span>
<span class="m" style="left:213.16px;top:281.98px;line-height:14px;color:#e2e21c;">return</span><span class="m" style="left:256.84px;top:281.98px;line-height:14px;color:#22e07e;">"hello world"</span>
<span class="m" style="left:188.2px;top:321.76px;line-height:14px;color:#1fb8ab;font-style:italic;">#</span><span class="m" style="left:194.74px;top:322.36px;line-height:14px;width:40.56px;color:#1fb8ab;font-size:9.500px;letter-spacing:0.64px;font-style:italic;">程序主体</span>
<span class="m" style="left:188.2px;top:335.02px;line-height:14px;color:#e2e21c;">if</span><span class="m" style="left:206.92px;top:335.02px;line-height:14px;color:#9fb0bd;">__name__</span><span class="m" style="left:263.08px;top:335.02px;line-height:14px;color:#e08a5c;">==</span><span class="m" style="left:281.8px;top:335.02px;line-height:14px;color:#22e07e;">"__main__"</span><span class="m" style="left:344.2px;top:335.02px;line-height:14px;color:#e08a5c;">:</span>
<span class="m" style="left:213.16px;top:348.28px;line-height:14px;color:#e2e21c;">print</span><span class="m" style="left:250.6px;top:348.28px;line-height:14px;color:#9fb0bd;">hello</span><span class="m" style="left:281.8px;top:348.28px;line-height:14px;color:#e08a5c;">()</span>
<span class="m" style="left:188.2px;top:361.54px;line-height:14px;color:#1fb8ab;font-style:italic;">#   print hello() == "hello world"</span>
<div style="left:832px;top:108.8px;width:10.4px;height:483.2px;background:linear-gradient(90deg,#e9e9e9,#f7f7f7 50%,#ededed)"></div>
<div style="left:834px;top:111.6px;width:7px;height:301px;background:linear-gradient(90deg,#dcdcdc,#d2d2d2);border:1px solid #b9b9b9;border-radius:3.500px"></div>
<div style="left:842.4px;top:108.8px;width:1.4px;height:494px;background:#e2e2e2"></div>
<div style="left:141.6px;top:592px;width:690.4px;height:10.8px;background:linear-gradient(#ededed,#f7f7f7 50%,#e9e9e9)"></div>
<div style="left:143px;top:594px;width:112px;height:7px;background:linear-gradient(#dcdcdc,#d2d2d2);border:1px solid #b9b9b9;border-radius:3.500px"></div>
<div style="left:832px;top:592px;width:10.4px;height:10.8px;background:#cdcdcd"></div>
<!-- right -->
<div style="left:844px;top:108px;width:154px;height:495px;background:#d2d2d2;border-left:1px solid #c6c6c6;border-top:1px solid #f2f2f2"></div>
<div id="right" style="left:846px;top:132.8px;width:152px;height:470px;background:#fdfdfd"></div>
<svg style="left:852.6px;top:114.6px;" width="11" height="12.6" viewBox="0 0 11 12.6"><path d="M.6.600h6.800L10.400 3.600v8.400H.6z" fill="#fbfbfb" stroke="#2a2a2a" stroke-width="1"/><path d="M3 6.300a2.600 2.600 0 0 1 4.600-1.300M8 7.600a2.600 2.600 0 0 1-4.600 1.300" fill="none" stroke="#1f8a2a" stroke-width="1.200"/><path d="M8.600 3.300v2.400H6.200zM2.400 10.600V8.200h2.400z" fill="#1f8a2a"/></svg>
<span style="left:875.8px;top:136px;line-height:14px;font-size:9.6px;font-weight:bold;font-style:italic;color:#2a2ad6;font-family:'Liberation Serif',serif;">v</span>
<span style="left:887.7px;top:137.3px;line-height:14px;font-size:10.9px;color:#3a3a3a;letter-spacing:-0.25px;">new_str : str</span>
<div style="left:885.6px;top:153.1px;width:32.2px;height:18.1px;background:#8e8e8e"></div>
<span style="left:876px;top:155.6px;line-height:14px;font-size:10.2px;font-weight:bold;font-style:italic;color:#111;font-family:'Liberation Serif',serif;">f</span>
<span style="left:887.7px;top:155.5px;line-height:14px;font-size:10.9px;color:#fff;letter-spacing:-0.27px;">hello()</span>
<!-- status -->
<div id="status" style="left:0px;top:603px;width:998px;height:21px;background:#d3d3d3;border-top:1px solid #bdbdbd"></div>
<div style="left:0px;top:604px;width:998px;height:1.2px;background:#efefef"></div>
<div style="left:2px;top:606.4px;width:606.4px;height:16.4px;border-top:1px solid #a0a0a0;border-left:1px solid #a0a0a0;border-right:1px solid #f6f6f6;border-bottom:1px solid #f0f0f0;background:#cfcfcf"></div>
<div style="left:610px;top:606.4px;width:53.4px;height:16.4px;border-top:1px solid #a0a0a0;border-left:1px solid #a0a0a0;border-right:1px solid #f6f6f6;border-bottom:1px solid #f0f0f0;background:#cfcfcf"></div>
<div style="left:665px;top:606.4px;width:60.4px;height:16.4px;border-top:1px solid #a0a0a0;border-left:1px solid #a0a0a0;border-right:1px solid #f6f6f6;border-bottom:1px solid #f0f0f0;background:#cfcfcf"></div>
<div style="left:727.2px;top:606.4px;width:60.4px;height:16.4px;border-top:1px solid #a0a0a0;border-left:1px solid #a0a0a0;border-right:1px solid #f6f6f6;border-bottom:1px solid #f0f0f0;background:#cfcfcf"></div>
<div style="left:789.4px;top:606.4px;width:92px;height:16.4px;border-top:1px solid #a0a0a0;border-left:1px solid #a0a0a0;border-right:1px solid #f6f6f6;border-bottom:1px solid #f0f0f0;background:#cfcfcf"></div>
<div style="left:883.2px;top:606.4px;width:115px;height:16.4px;border-top:1px solid #a0a0a0;border-left:1px solid #a0a0a0;border-right:1px solid #f6f6f6;border-bottom:1px solid #f0f0f0;background:#cfcfcf"></div>
<span style="left:613px;top:608.95px;line-height:14px;font-size:9.72px;color:#2a2a2a;letter-spacing:0.28px;">行</span>
<span style="left:623.2px;top:607.7px;line-height:14px;font-size:10.9px;color:#2a2a2a;letter-spacing:-0.17px;">: 1</span>
<span style="left:668px;top:608.95px;line-height:14px;font-size:9.72px;color:#2a2a2a;letter-spacing:0.28px;">列</span>
<span style="left:678.2px;top:607.7px;line-height:14px;font-size:10.9px;color:#2a2a2a;letter-spacing:-0.17px;">: 1</span>
<span style="left:729.8px;top:607.7px;line-height:14px;font-size:10.9px;color:#2a2a2a;letter-spacing:-0.35px;">Selected: 0</span>
<span style="left:793px;top:608.95px;line-height:14px;font-size:9.72px;color:#2a2a2a;letter-spacing:-0.05px;">换行符</span><span style="left:825.72px;top:608.95px;line-height:14px;font-size:9.72px;color:#2a2a2a;">：</span>
<span style="left:833.1px;top:607.7px;line-height:14px;font-size:10.9px;color:#2a2a2a;letter-spacing:0.25px;">\n</span>
<span style="left:886.2px;top:608.95px;line-height:14px;font-size:9.72px;color:#2a2a2a;letter-spacing:0.08px;">编码</span><span style="left:909.32px;top:608.95px;line-height:14px;font-size:9.72px;color:#2a2a2a;">：</span>
<span style="left:916.8px;top:607.7px;line-height:14px;font-size:10.1px;color:#2a2a2a;letter-spacing:-0.4px;">UTF-8</span>
<!-- dialog -->
<div id="dlg" style="left:340px;top:167.5px;width:320.8px;height:346.2px;background:#d3d3d3;border-radius:4.5px 4.5px 0 0;box-shadow:0 0 0 .6px rgba(10,20,30,.55)"></div>
<div style="left:340px;top:167.5px;width:320.8px;height:19.5px;background:linear-gradient(#f6f6f6 0,#e9e9e9 1.5px,#dedede 8px,#d3d3d3);border-radius:4.5px 4.5px 0 0"></div>
<div style="left:340px;top:187px;width:3.6px;height:326.7px;background:linear-gradient(90deg,#dedede,#d3d3d3)"></div>
<svg style="left:347.7px;top:175.5px" width="6.6" height="3.8" viewBox="0 0 6.600 3.800"><path d="M0 0h6.600L3.300 3.800z" fill="#5e5e5e"/></svg>
<span style="left:470.4px;top:170.55px;line-height:14px;font-size:9.54px;font-weight:bold;color:#5a5a5a;letter-spacing:0.55px;text-shadow:0 1px 0 #efefef;">语法参数设置</span>
<svg style="left:646px;top:174px" width="6.6" height="6.600" viewBox="0 0 6.600 6.600"><path d="M.7.700l5.200 5.200M5.900.700L.7 5.900" stroke="#808080" stroke-width="1.500"/></svg>
<span style="left:344.5px;top:188.65px;line-height:14px;font-size:9.72px;color:#2e2e2e;letter-spacing:0.28px;">语法选择</span><span style="left:387.92px;top:188.65px;line-height:14px;font-size:9.72px;color:#2e2e2e;">：</span>
<span style="left:430.2px;top:188.65px;line-height:14px;font-size:9.72px;color:#2e2e2e;letter-spacing:0.36px;">文件扩展名</span><span style="left:483.12px;top:188.65px;line-height:14px;font-size:9.72px;color:#2e2e2e;">：</span>
<div style="left:345.5px;top:203px;width:58.5px;height:16.4px;background:#fff;border:1px solid #b9b9b9;border-top-color:#a3a3a3;border-radius:2px;box-shadow:inset 0 1px 1px #e4e4e4;border-radius:2px 0 0 2px"></div>
<div style="left:403.5px;top:203px;width:17.2px;height:16.4px;background:linear-gradient(#ececec,#dedede 45%,#cfcfcf);border:1px solid #a6a6a6;border-radius:2px;box-shadow:0 1px 0 #e9e9e9,inset 0 1px 0 #f8f8f8;border-radius:0 2px 2px 0"></div>
<div style="left:347.9px;top:205.3px;width:1px;height:11.8px;background:#5a2a1a"></div>
<span style="left:348.9px;top:204.6px;line-height:14px;font-size:10.9px;color:#1e1e1e;letter-spacing:-0.07px;">Python</span>
<svg style="left:409px;top:210px" width="6.6" height="3.8" viewBox="0 0 6.600 3.800"><path d="M0 0h6.600L3.300 3.800z" fill="#3a3a3a"/></svg>
<div style="left:431.5px;top:202.7px;width:169px;height:18.6px;background:#fff;border:1px solid #b9b9b9;border-top-color:#a3a3a3;border-radius:2px;box-shadow:inset 0 1px 1px #e4e4e4"></div>
<span style="left:434.8px;top:205.2px;line-height:14px;font-size:10.9px;color:#1e1e1e;letter-spacing:0.24px;">*.py;*.pyw</span>
<span style="left:344.5px;top:223.15px;line-height:14px;font-size:9.72px;color:#2e2e2e;letter-spacing:0.28px;">语法项</span><span style="left:377.32px;top:223.15px;line-height:14px;font-size:9.72px;color:#2e2e2e;">：</span>
<div style="left:344px;top:238px;width:125.2px;height:93px;background:#fefefe;border:1px solid #c3c3c3;border-top-color:#a9a9a9"></div>
<div style="left:344.6px;top:238.6px;width:111.6px;height:15.3px;background:#9cb2cd"></div>
<span style="left:345.8px;top:239.85px;line-height:14px;font-size:9.72px;color:#fff;letter-spacing:0.56px;">缺省样式</span>
<span style="left:345.8px;top:255.55px;line-height:14px;font-size:9.72px;color:#1e1e1e;letter-spacing:0.56px;">光标前景色</span>
<span style="left:345.8px;top:271.25px;line-height:14px;font-size:9.72px;color:#1e1e1e;letter-spacing:0.56px;">光标行背景色</span>
<span style="left:345.8px;top:286.95px;line-height:14px;font-size:9.72px;color:#1e1e1e;letter-spacing:0.56px;">选择块背景色</span>
<span style="left:345.8px;top:302.65px;line-height:14px;font-size:9.72px;color:#1e1e1e;letter-spacing:0.56px;">拆叠边界颜色</span>
<span style="left:345.8px;top:318.35px;line-height:14px;font-size:9.72px;color:#1e1e1e;letter-spacing:0.56px;">标记颜色</span>
<div style="left:456.4px;top:238.6px;width:12.2px;height:92px;background:linear-gradient(90deg,#ebebeb,#fbfbfb 50%,#f0f0f0)"></div>
<div style="left:459.6px;top:240.2px;width:7px;height:39px;background:linear-gradient(90deg,#e3e3e3,#d6d6d6);border:1px solid #bcbcbc;border-radius:3.500px"></div>
<div style="left:479.5px;top:244.3px;width:9.4px;height:9.4px;background:linear-gradient(#b9cbdd,#8fa9c4);border:1px solid #7f96ae;border-radius:1.500px"></div><svg style="left:480px;top:243.7px" width="10.5" height="9.500" viewBox="0 0 10.500 9.500"><path d="M1.300 4.800L4 7.800 9.600 1.200" fill="none" stroke="#111" stroke-width="1.900"/></svg>
<span style="left:488.8px;top:241.35px;line-height:14px;font-size:9.72px;color:#2e2e2e;letter-spacing:-0.07px;">字体名称</span><span style="left:533.02px;top:241.35px;line-height:14px;font-size:9.72px;color:#2e2e2e;">：</span>
<div style="left:479.5px;top:264.1px;width:9.4px;height:9.4px;background:linear-gradient(#b9cbdd,#8fa9c4);border:1px solid #7f96ae;border-radius:1.500px"></div><svg style="left:480px;top:263.5px" width="10.5" height="9.500" viewBox="0 0 10.500 9.500"><path d="M1.300 4.800L4 7.800 9.600 1.200" fill="none" stroke="#111" stroke-width="1.900"/></svg>
<span style="left:488.8px;top:261.15px;line-height:14px;font-size:9.72px;color:#2e2e2e;letter-spacing:0.08px;">字体大小</span><span style="left:533.02px;top:261.15px;line-height:14px;font-size:9.72px;color:#2e2e2e;">：</span>
<div style="left:479.5px;top:284.2px;width:9.4px;height:9.4px;background:linear-gradient(#b9cbdd,#8fa9c4);border:1px solid #7f96ae;border-radius:1.500px"></div><svg style="left:480px;top:283.6px" width="10.5" height="9.500" viewBox="0 0 10.500 9.500"><path d="M1.300 4.800L4 7.800 9.600 1.200" fill="none" stroke="#111" stroke-width="1.900"/></svg>
<span style="left:488.8px;top:281.25px;line-height:14px;font-size:9.72px;color:#2e2e2e;letter-spacing:0.15px;">前景色</span><span style="left:522.82px;top:281.25px;line-height:14px;font-size:9.72px;color:#2e2e2e;">：</span>
<div style="left:479.5px;top:303.5px;width:9.4px;height:9.4px;background:linear-gradient(#b9cbdd,#8fa9c4);border:1px solid #7f96ae;border-radius:1.500px"></div><svg style="left:480px;top:302.9px" width="10.5" height="9.500" viewBox="0 0 10.500 9.500"><path d="M1.300 4.800L4 7.800 9.600 1.200" fill="none" stroke="#111" stroke-width="1.900"/></svg>
<span style="left:488.8px;top:300.55px;line-height:14px;font-size:9.72px;color:#2e2e2e;letter-spacing:0.15px;">背景色</span><span style="left:522.82px;top:300.55px;line-height:14px;font-size:9.72px;color:#2e2e2e;">：</span>
<div style="left:540.8px;top:240px;width:88.6px;height:16.8px;background:#fff;border:1px solid #b9b9b9;border-top-color:#a3a3a3;border-radius:2px;box-shadow:inset 0 1px 1px #e4e4e4;border-radius:2px 0 0 2px"></div>
<div style="left:628.9px;top:240px;width:18.4px;height:16.8px;background:linear-gradient(#ececec,#dedede 45%,#cfcfcf);border:1px solid #a6a6a6;border-radius:2px;box-shadow:0 1px 0 #e9e9e9,inset 0 1px 0 #f8f8f8;border-radius:0 2px 2px 0"></div>
<span style="left:544px;top:241.35px;line-height:14px;font-size:9.72px;color:#1e1e1e;letter-spacing:0.38px;">文泉驿等宽微米黑</span>
<svg style="left:635.4px;top:246.8px" width="6.6" height="3.8" viewBox="0 0 6.600 3.800"><path d="M0 0h6.600L3.300 3.800z" fill="#3a3a3a"/></svg>
<div style="left:540.8px;top:260px;width:18.7px;height:16.4px;background:#fff;border:1px solid #b9b9b9;border-top-color:#a3a3a3;border-radius:2px;box-shadow:inset 0 1px 1px #e4e4e4;border-radius:2px 0 0 2px"></div>
<div style="left:559px;top:260px;width:17.5px;height:16.4px;background:linear-gradient(#ececec,#dedede 45%,#cfcfcf);border:1px solid #a6a6a6;border-radius:2px;box-shadow:0 1px 0 #e9e9e9,inset 0 1px 0 #f8f8f8;border-radius:0 2px 2px 0"></div>
<span style="left:543.8px;top:261.9px;line-height:14px;font-size:10.9px;color:#1e1e1e;letter-spacing:-0.36px;">10</span>
<svg style="left:565px;top:267.2px" width="6.6" height="3.8" viewBox="0 0 6.600 3.800"><path d="M0 0h6.600L3.300 3.800z" fill="#3a3a3a"/></svg>
<div style="left:540.8px;top:279.3px;width:38.8px;height:17.8px;background:#fff;border:1px solid #b9b9b9;border-top-color:#a3a3a3;border-radius:2px;box-shadow:inset 0 1px 1px #e4e4e4"></div>
<span style="left:544px;top:281.6px;line-height:14px;font-size:10.9px;color:#1e1e1e;letter-spacing:-0.64px;width:34.600px;overflow:hidden;">#FFFFF</span>
<div style="left:540.8px;top:298.8px;width:38.8px;height:18.2px;background:#fff;border:1px solid #b9b9b9;border-top-color:#a3a3a3;border-radius:2px;box-shadow:inset 0 1px 1px #e4e4e4"></div>
<span style="left:544px;top:301.2px;line-height:14px;font-size:10.9px;color:#1e1e1e;letter-spacing:-0.01px;width:34.600px;overflow:hidden;">#11243</span>
<div style="left:587.5px;top:278.5px;width:68.6px;height:20.6px;background:linear-gradient(#ececec,#dedede 45%,#cfcfcf);border:1px solid #a6a6a6;border-radius:2px;box-shadow:0 1px 0 #e9e9e9,inset 0 1px 0 #f8f8f8"></div>
<span style="left:601.2px;top:282.25px;line-height:14px;font-size:9.72px;color:#3c3c3c;letter-spacing:0.38px;">选择颜色</span>
<div style="left:587.5px;top:299px;width:68.6px;height:20.7px;background:linear-gradient(#ececec,#dedede 45%,#cfcfcf);border:1px solid #a6a6a6;border-radius:2px;box-shadow:0 1px 0 #e9e9e9,inset 0 1px 0 #f8f8f8"></div>
<span style="left:601.2px;top:302.45px;line-height:14px;font-size:9.72px;color:#3c3c3c;letter-spacing:0.38px;">选择颜色</span>
<div style="left:491.7px;top:322.2px;width:9.6px;height:9.6px;background:#fdfdfd;border:1px solid #c4c4c4;border-radius:1.500px"></div>
<span style="left:506.4px;top:320.15px;line-height:14px;font-size:9.72px;color:#555;letter-spacing:0.38px;">粗体</span>
<div style="left:541.9px;top:322.2px;width:9.6px;height:9.6px;background:#fdfdfd;border:1px solid #c4c4c4;border-radius:1.500px"></div>
<span style="left:557px;top:320.15px;line-height:14px;font-size:9.72px;color:#555;letter-spacing:0.38px;">斜体</span>
<div style="left:588.6px;top:322.2px;width:9.6px;height:9.6px;background:#fdfdfd;border:1px solid #c4c4c4;border-radius:1.500px"></div>
<span style="left:603.8px;top:320.15px;line-height:14px;font-size:9.72px;color:#555;letter-spacing:0.38px;">下划线</span>
<span style="left:344.5px;top:337.85px;line-height:14px;font-size:9.72px;color:#555;letter-spacing:0.28px;">预览</span><span style="left:368.02px;top:337.85px;line-height:14px;font-size:9.72px;color:#555;">：</span>
<div style="left:343.6px;top:352.8px;width:306px;height:102.4px;background:#fafafa;border:1px solid #e6e6e6"></div>
<div style="left:344.2px;top:353.4px;width:292.3px;height:101.1px;background:#112435;overflow:hidden"><div style="left:0px;top:0px;width:32px;height:101.5px;background:#21445f"></div><span class="m n" style="left:10.66px;top:0.8px">1</span><span class="m n" style="left:10.66px;top:14.06px">2</span><span class="m n" style="left:10.66px;top:27.32px">3</span><span class="m n" style="left:10.66px;top:40.58px">4</span><span class="m n" style="left:10.66px;top:53.84px">5</span><span class="m n" style="left:10.66px;top:67.1px">6</span><span class="m n" style="left:10.66px;top:80.36px">7</span><span class="m n" style="left:10.66px;top:93.62px">8</span><div style="left:108px;top:92.7px;width:200px;height:10px;background:#efbce3"></div><span class="m" style="left:33.1px;top:0.8px;line-height:14px;color:#1fb8ab;font-style:italic;">#Comment Blocks!</span><span class="m" style="left:33.1px;top:14.06px;line-height:14px;color:#e2e21c;">class</span><span class="m" style="left:70.54px;top:14.06px;line-height:14px;color:#b9d83e;">MyClass</span><span class="m" style="left:114.22px;top:14.06px;line-height:14px;color:#e08a5c;">(</span><span class="m" style="left:120.46px;top:14.06px;line-height:14px;color:#9fb0bd;">MyParent</span><span class="m" style="left:170.38px;top:14.06px;line-height:14px;color:#e08a5c;">):</span><span class="m" style="left:58.06px;top:27.32px;line-height:14px;color:#1fd28c;">""" Class example """</span><span class="m" style="left:58.06px;top:40.58px;line-height:14px;color:#e2e21c;">def</span><span class="m" style="left:83.02px;top:40.58px;line-height:14px;color:#8f9c84;">__init__</span><span class="m" style="left:132.94px;top:40.58px;line-height:14px;color:#e08a5c;">(</span><span class="m" style="left:139.18px;top:40.58px;line-height:14px;color:#e2e21c;">self</span><span class="m" style="left:164.14px;top:40.58px;line-height:14px;color:#e08a5c;">):</span><span class="m" style="left:83.02px;top:53.84px;line-height:14px;color:#1fd28c;">''' Triple quotes '''</span><span class="m" style="left:83.02px;top:67.1px;line-height:14px;color:#1fb8ab;font-style:italic;"># Do something silly</span><span class="m" style="left:83.02px;top:80.36px;line-height:14px;color:#9fb0bd;">a</span><span class="m" style="left:95.5px;top:80.36px;line-height:14px;color:#e08a5c;">= (</span><span class="m" style="left:114.22px;top:80.36px;line-height:14px;color:#d9a232;">'Py'</span><span class="m" style="left:145.42px;top:80.36px;line-height:14px;color:#e08a5c;">+</span><span class="m" style="left:157.9px;top:80.36px;line-height:14px;color:#22e07e;">"thon"</span><span class="m" style="left:195.34px;top:80.36px;line-height:14px;color:#e08a5c;">) *</span><span class="m" style="left:220.3px;top:80.36px;line-height:14px;color:#cf1fe3;">100</span><span class="m" style="left:83.02px;top:93.62px;line-height:14px;color:#9fb0bd;">b</span><span class="m" style="left:95.5px;top:93.62px;line-height:14px;color:#e08a5c;">=</span><span class="m" style="left:107.98px;top:93.62px;line-height:14px;color:#f0708e;">'EOL unclosed string</span></div>
<div style="left:636.5px;top:353.4px;width:12.5px;height:101.1px;background:linear-gradient(90deg,#ebebeb,#fbfbfb 50%,#f0f0f0)"></div>
<div style="left:639.6px;top:355.2px;width:7px;height:66px;background:linear-gradient(90deg,#e3e3e3,#d6d6d6);border:1px solid #bcbcbc;border-radius:3.500px"></div>
<div style="left:458.1px;top:467.3px;width:44.6px;height:21.2px;background:linear-gradient(#dadada,#cecece 45%,#c0c0c0);border:1px solid #a6a6a6;border-radius:2px;box-shadow:0 1px 0 #e9e9e9,inset 0 1px 0 #f8f8f8;border-color:#8e8e8e"></div>
<span style="left:470.6px;top:471.85px;line-height:14px;font-size:9.72px;color:#3c3c3c;letter-spacing:0.48px;">确定</span>
<div style="left:505.7px;top:467.3px;width:43.6px;height:21.2px;background:linear-gradient(#ececec,#dedede 45%,#cfcfcf);border:1px solid #a6a6a6;border-radius:2px;box-shadow:0 1px 0 #e9e9e9,inset 0 1px 0 #f8f8f8"></div>
<span style="left:517.4px;top:471.85px;line-height:14px;font-size:9.72px;color:#3c3c3c;letter-spacing:0.48px;">取消</span>
<div style="left:552.5px;top:467.3px;width:43.8px;height:21.2px;background:linear-gradient(#ececec,#dedede 45%,#cfcfcf);border:1px solid #a6a6a6;border-radius:2px;box-shadow:0 1px 0 #e9e9e9,inset 0 1px 0 #f8f8f8"></div>
<span style="left:564.4px;top:471.85px;line-height:14px;font-size:9.72px;color:#3c3c3c;letter-spacing:0.48px;">应用</span>
<svg style="left:520px;top:215px" width="150" height="70" viewBox="520 215 150 70"><ellipse cx="593.300" cy="243.800" rx="66.600" ry="21.300" fill="none" stroke="#f20000" stroke-width="2.200"/><circle cx="635.200" cy="277.500" r=".9" fill="#f20000"/></svg>
<!-- notify -->
<div id="notify" style="left:772.8px;top:32.1px;width:213.2px;height:58.7px;background:#2b2b2b;border-radius:6.500px"></div>
<svg style="left:785.5px;top:47.8px;" width="33" height="28" viewBox="0 0 33 28"><path d="M8.700.500L17 8.200h-4v10.300H4.400V8.200h-4z" fill="#7f7f7f"/><path d="M23.500 27.500l-8.300-7.700h4V9.500h8.600v10.300h4z" fill="#6c6c6c"/></svg>
<span style="left:826px;top:43.85px;line-height:14px;font-size:9.72px;font-weight:bold;color:#fff;letter-spacing:1.03px;">有线网络</span>
<span style="left:826px;top:62.95px;line-height:14px;font-size:9.72px;color:#e6e6e6;letter-spacing:0.29px;">连接已断开 - 您现在处于离线状态</span>
</body>
</html>
